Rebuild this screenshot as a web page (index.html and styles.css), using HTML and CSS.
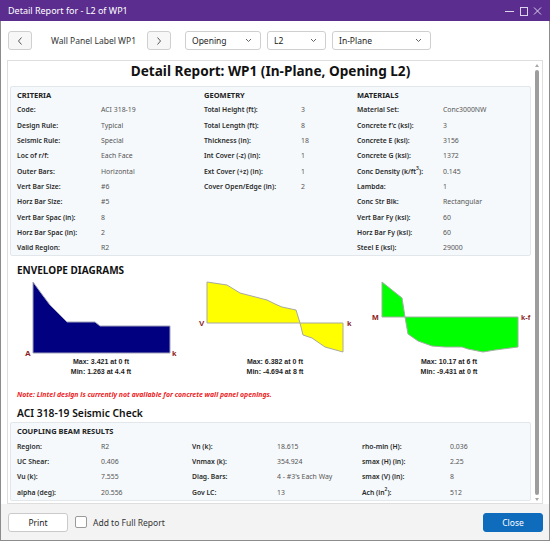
FILE: index.html
```html
<!DOCTYPE html>
<html>
<head>
<meta charset="utf-8">
<title>Detail Report</title>
<link rel="stylesheet" href="styles.css">
</head>
<body>
<div class="window">
  <div class="titlebar">
    <span class="wintitle">Detail Report for - L2 of WP1</span>
    <svg class="winctl" width="44" height="20" viewBox="0 0 44 20">
      <line x1="3" y1="10.5" x2="12" y2="10.5"/>
      <rect x="18.5" y="6.5" width="7" height="8"/>
      <path d="M32 6.5 L39 13.5 M39 6.5 L32 13.5"/>
    </svg>
  </div>

  <div class="toolbar">
    <button class="navbtn"><svg width="8" height="10" viewBox="0 0 8 10"><path d="M5.5 1.5 L2.5 5 L5.5 8.5"/></svg></button>
    <span class="paneltitle">Wall Panel Label WP1</span>
    <button class="navbtn"><svg width="8" height="10" viewBox="0 0 8 10"><path d="M2.5 1.5 L5.5 5 L2.5 8.5"/></svg></button>
    <div class="select sel-type"><span>Opening</span><svg width="7" height="5" viewBox="0 0 7 5"><path d="M1 1 L3.5 3.5 L6 1"/></svg></div>
    <div class="select sel-id"><span>L2</span><svg width="7" height="5" viewBox="0 0 7 5"><path d="M1 1 L3.5 3.5 L6 1"/></svg></div>
    <div class="select sel-dir"><span>In-Plane</span><svg width="7" height="5" viewBox="0 0 7 5"><path d="M1 1 L3.5 3.5 L6 1"/></svg></div>
  </div>

  <div class="panel">
    <div class="content">
      <div class="report-title">Detail Report: WP1 (In-Plane, Opening L2)</div>

      <div class="box grid-main">
        <div class="hd">CRITERIA</div><div></div><div class="hd">GEOMETRY</div><div></div><div class="hd">MATERIALS</div><div></div>

        <div class="lb">Code:</div><div class="vl">ACI 318-19</div>
        <div class="lb">Total Height (ft):</div><div class="vl">3</div>
        <div class="lb">Material Set:</div><div class="vl">Conc3000NW</div>

        <div class="lb">Design Rule:</div><div class="vl">Typical</div>
        <div class="lb">Total Length (ft):</div><div class="vl">8</div>
        <div class="lb">Concrete f'c (ksi):</div><div class="vl">3</div>

        <div class="lb">Seismic Rule:</div><div class="vl">Special</div>
        <div class="lb">Thickness (in):</div><div class="vl">18</div>
        <div class="lb">Concrete E (ksi):</div><div class="vl">3156</div>

        <div class="lb">Loc of r/f:</div><div class="vl">Each Face</div>
        <div class="lb">Int Cover (-z) (in):</div><div class="vl">1</div>
        <div class="lb">Concrete G (ksi):</div><div class="vl">1372</div>

        <div class="lb">Outer Bars:</div><div class="vl">Horizontal</div>
        <div class="lb">Ext Cover (+z) (in):</div><div class="vl">1</div>
        <div class="lb">Conc Density (k/ft<sup>3</sup>):</div><div class="vl">0.145</div>

        <div class="lb">Vert Bar Size:</div><div class="vl">#6</div>
        <div class="lb">Cover Open/Edge (in):</div><div class="vl">2</div>
        <div class="lb">Lambda:</div><div class="vl">1</div>

        <div class="lb">Horz Bar Size:</div><div class="vl">#5</div>
        <div></div><div></div>
        <div class="lb">Conc Str Blk:</div><div class="vl">Rectangular</div>

        <div class="lb">Vert Bar Spac (in):</div><div class="vl">8</div>
        <div></div><div></div>
        <div class="lb">Vert Bar Fy (ksi):</div><div class="vl">60</div>

        <div class="lb">Horz Bar Spac (in):</div><div class="vl">2</div>
        <div></div><div></div>
        <div class="lb">Horz Bar Fy (ksi):</div><div class="vl">60</div>

        <div class="lb">Valid Region:</div><div class="vl">R2</div>
        <div></div><div></div>
        <div class="lb">Steel E (ksi):</div><div class="vl">29000</div>
      </div>

      <div class="section-title">ENVELOPE DIAGRAMS</div>

      <div class="diagrams">
        <div class="diagram">
          <svg width="174" height="78" viewBox="0 0 174 78">
            <polygon class="axial" points="19,3 27,14 36,26 45,35 53,43 81,43 86,47 156,47 156,74 19,74"/>
            <text class="dlabel" x="11" y="77">A</text>
            <text class="dlabel" x="158" y="77">k</text>
          </svg>
          <div class="caption">Max: 3.421 at 0 ft<br>Min: 1.263 at 4.4 ft</div>
        </div>
        <div class="diagram">
          <svg width="174" height="78" viewBox="0 0 174 78">
            <polygon class="shear" points="19,44 19,3 39,6 52,14 79,21 87,25 94,28 108,31 112,44"/>
            <polygon class="shear" points="112,44 115,56 124,59 137,68 155,73 155,44"/>
            <text class="dlabel" x="11" y="47">V</text>
            <text class="dlabel" x="159" y="47">k</text>
          </svg>
          <div class="caption">Max: 6.382 at 0 ft<br>Min: -4.694 at 8 ft</div>
        </div>
        <div class="diagram">
          <svg width="174" height="78" viewBox="0 0 174 78">
            <polygon class="moment" points="20,38 20,3 40,19 43,38"/>
            <polygon class="moment" points="43,38 46,55 56,62 70,67 83,68 100,68 106,70 121,73 133,71 156,68 156,38"/>
            <text class="dlabel" x="10" y="41">M</text>
            <text class="dlabel dlabel-sm" x="159" y="41">k-f</text>
          </svg>
          <div class="caption">Max: 10.17 at 6 ft<br>Min: -9.431 at 0 ft</div>
        </div>
      </div>

      <div class="note">Note: Lintel design is currently not available for concrete wall panel openings.</div>

      <div class="check-title">ACI 318-19 Seismic Check</div>

      <div class="box grid-beam">
        <div class="hd span-all">COUPLING BEAM RESULTS</div>

        <div class="lb">Region:</div><div class="vl">R2</div>
        <div class="lb">Vn (k):</div><div class="vl">18.615</div>
        <div class="lb">rho-min (H):</div><div class="vl">0.036</div>

        <div class="lb">UC Shear:</div><div class="vl">0.406</div>
        <div class="lb">Vnmax (k):</div><div class="vl">354.924</div>
        <div class="lb">smax (H) (in):</div><div class="vl">2.25</div>

        <div class="lb">Vu (k):</div><div class="vl">7.555</div>
        <div class="lb">Diag. Bars:</div><div class="vl">4 - #3's Each Way</div>
        <div class="lb">smax (V) (in):</div><div class="vl">8</div>

        <div class="lb">alpha (deg):</div><div class="vl">20.556</div>
        <div class="lb">Gov LC:</div><div class="vl">13</div>
        <div class="lb">Ach (in<sup>2</sup>):</div><div class="vl">512</div>
      </div>
    </div>

    <div class="scrollbar">
      <span class="arrow-up"></span>
      <span class="thumb"></span>
      <span class="arrow-down"></span>
    </div>
  </div>

  <div class="footer">
    <button class="btn">Print</button>
    <span class="checkbox"></span>
    <span class="checklabel">Add to Full Report</span>
    <button class="btn btn-primary">Close</button>
  </div>
</div>
</body>
</html>
```

FILE: styles.css
```css
* {
  box-sizing: border-box;
  margin: 0;
  padding: 0;
}

html, body {
  width: 550px;
  height: 541px;
  overflow: hidden;
  background: #ffffff;
}

body {
  font-family: "Noto Sans", "Open Sans", sans-serif;
  color: #222;
}

.window {
  width: 550px;
  height: 541px;
  display: flex;
  flex-direction: column;
  border: 1px solid #8c8c8c;
  border-top: none;
  background: #ffffff;
}

/* title bar */
.titlebar {
  height: 21px;
  margin: 0 -1px;
  background: #5b2d8e;
  color: #ffffff;
  display: flex;
  align-items: center;
  justify-content: space-between;
  padding-left: 8px;
  padding-right: 4px;
}

.wintitle {
  font-size: 9px;
  line-height: 21px;
}

.winctl line,
.winctl rect,
.winctl path {
  stroke: #ddd3ec;
  stroke-width: 1;
  fill: none;
}

/* toolbar */
.toolbar {
  height: 39px;
  display: flex;
  align-items: center;
  padding: 0 7px;
}

.navbtn {
  width: 24px;
  height: 19px;
  border: 1px solid #cfcfcf;
  border-radius: 3px;
  background: #f7f7f7;
  display: flex;
  align-items: center;
  justify-content: center;
}

.navbtn path {
  stroke: #555;
  stroke-width: 1;
  fill: none;
}

.paneltitle {
  width: 115px;
  padding-left: 19px;
  font-size: 8.5px;
  color: #333;
}

.select {
  height: 19px;
  border: 1px solid #cfcfcf;
  border-radius: 3px;
  background: #fff;
  display: flex;
  align-items: center;
  justify-content: space-between;
  padding: 0 8px 0 6px;
  font-size: 8.5px;
  color: #222;
}

.select path {
  stroke: #666;
  stroke-width: 1;
  fill: none;
}

.sel-type {
  width: 76px;
  margin-left: 14px;
}

.sel-id {
  width: 59px;
  margin-left: 6px;
}

.sel-dir {
  width: 99px;
  margin-left: 6px;
}

/* report panel */
.panel {
  flex: 1;
  margin: 0 6px;
  border: 1px solid #dedede;
  display: flex;
  min-height: 0;
  background: #fff;
}

.content {
  flex: 1;
  overflow: hidden;
  padding: 0 1px 0 2px;
}

.report-title {
  text-align: center;
  font-size: 13.6px;
  font-weight: 700;
  line-height: 19px;
  color: #111;
}

.box {
  margin-top: 6px;
  border: 1px solid #e2e7eb;
  border-radius: 2px;
  background: #f5f9fc;
  display: grid;
  grid-auto-rows: 15.3px;
  align-items: center;
  padding-left: 6px;
}

.grid-main {
  grid-template-columns: 84px 103px 97px 56px 86px 1fr;
}

.grid-beam {
  margin-top: 1px;
  grid-template-columns: 84px 91px 85px 85px 88px 1fr;
}

.span-all {
  grid-column: 1 / -1;
}

.hd {
  font-size: 7.5px;
  font-weight: 700;
  color: #222;
  white-space: nowrap;
}

.lb {
  font-size: 6.8px;
  font-weight: 600;
  color: #2a2a2a;
  white-space: nowrap;
}

.vl {
  font-size: 6.9px;
  color: #555;
  white-space: nowrap;
}

sup {
  font-size: 5px;
  vertical-align: 4px;
  line-height: 0;
}

.section-title {
  margin-top: 7px;
  padding-left: 7px;
  font-size: 10px;
  font-weight: 700;
  line-height: 14px;
  color: #111;
}

/* diagrams */
.diagrams {
  margin-top: 2px;
  display: flex;
  padding-left: 4px;
}

.diagram {
  width: 174px;
  display: flex;
  flex-direction: column;
  align-items: center;
}

.diagram svg {
  display: block;
}

.axial {
  fill: #000080;
  stroke: #a0a0b8;
  stroke-width: 1;
}

.shear {
  fill: #ffff00;
  stroke: #a8a8a0;
  stroke-width: 1;
}

.moment {
  fill: #00ff00;
  stroke: #a0b0a0;
  stroke-width: 1;
}

.dlabel {
  font-family: "Liberation Sans", Arial, sans-serif;
  font-size: 8px;
  font-weight: 700;
  fill: #8b1a1a;
}

.dlabel-sm {
  font-size: 7.5px;
}

.caption {
  font-family: "Liberation Sans", Arial, sans-serif;
  font-size: 7px;
  font-weight: 700;
  line-height: 10px;
  text-align: center;
  color: #1e1e1e;
}

.note {
  margin-top: 13px;
  padding-left: 7px;
  font-size: 6.9px;
  font-weight: 700;
  font-style: italic;
  line-height: 10px;
  color: #ee1c25;
  white-space: nowrap;
}

.check-title {
  margin-top: 5px;
  padding-left: 7px;
  font-size: 10.3px;
  font-weight: 600;
  line-height: 16px;
  color: #111;
}

/* scrollbar */
.scrollbar {
  width: 10px;
  display: flex;
  flex-direction: column;
  align-items: center;
  padding: 3px 0 2px;
}

.arrow-up,
.arrow-down {
  width: 0;
  height: 0;
  border-left: 2.5px solid transparent;
  border-right: 2.5px solid transparent;
}

.arrow-up {
  border-bottom: 3px solid #a8a8a8;
}

.arrow-down {
  border-top: 3px solid #a8a8a8;
}

.thumb {
  flex: 1;
  width: 4px;
  margin: 3px 0;
  border-radius: 2px;
  background: #9d9d9d;
}

/* footer */
.footer {
  height: 36px;
  background: #f3f3f3;
  display: flex;
  align-items: center;
  padding: 0 6px 0 7px;
}

.btn {
  width: 60px;
  height: 19px;
  border: 1px solid #cacaca;
  border-radius: 3px;
  background: #ffffff;
  font-family: "Noto Sans", "Open Sans", sans-serif;
  font-size: 8.5px;
  color: #222;
}

.btn-primary {
  margin-left: auto;
  background: #0f6cbd;
  border-color: #0f6cbd;
  color: #ffffff;
}

.checkbox {
  width: 12px;
  height: 12px;
  margin-left: 7px;
  border: 1px solid #9a9a9a;
  border-radius: 2px;
  background: #ffffff;
}

.checklabel {
  margin-left: 6px;
  font-size: 8.5px;
  color: #333;
}
```
